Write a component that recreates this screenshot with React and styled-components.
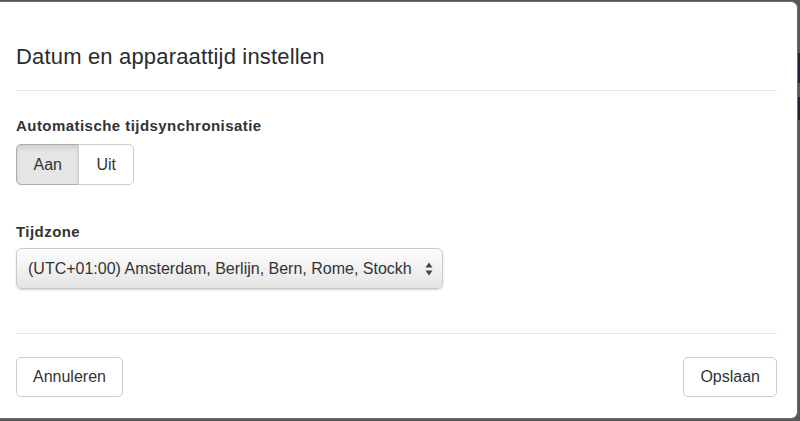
import React from "react";
import styled, { createGlobalStyle } from "styled-components";

const Global = createGlobalStyle`
  html, body {
    margin: 0;
    padding: 0;
    height: 421px;
    overflow: hidden;
  }
  body {
    background: linear-gradient(
      to bottom,
      #575757 0 53px,
      #1c2638 53px 83px,
      #575757 83px 97px,
      #1c2638 97px 120px,
      #575757 120px
    );
    font-family: "Liberation Sans", Arial, sans-serif;
    color: #333;
  }
`;

const Modal = styled.div`
  box-sizing: border-box;
  width: 798px;
  margin-top: 1px;
  background: #fff;
  border: 1px solid #6e6e6e;
  border-left: none;
  border-radius: 0 7px 7px 0;
  padding: 0 20px 0 16px;
`;

const Header = styled.div`
  padding: 43px 0 21px;
  border-bottom: 1px solid #e5e5e5;
`;

const Title = styled.h4`
  margin: 0;
  font-size: 22px;
  line-height: 24px;
  font-weight: 400;
  letter-spacing: 0.17px;
  color: #2b2b2b;
`;

const Body = styled.div`
  padding: 25px 0 44px;
  display: flex;
  flex-direction: column;
  align-items: flex-start;
`;

const Label = styled.label`
  display: block;
  font-size: 15px;
  line-height: 20px;
  font-weight: 700;
  letter-spacing: 0.45px;
  color: #333;
  margin-top: ${(p) => p.$top || 0}px;
  margin-bottom: ${(p) => p.$bottom || 0}px;
`;

const Group = styled.div`
  display: flex;
`;

const ToggleButton = styled.button`
  box-sizing: border-box;
  height: 41px;
  padding: 0 ${(p) => p.$pad}px;
  font-family: inherit;
  font-size: 16px;
  color: #333;
  background: ${(p) => (p.$active ? "#e6e6e6" : "#fff")};
  border: 1px solid ${(p) => (p.$active ? "#adadad" : "#ccc")};
  box-shadow: ${(p) => (p.$active ? "inset 0 3px 5px rgba(0,0,0,0.1)" : "none")};
  cursor: pointer;
  &:first-child {
    border-radius: 5px 0 0 5px;
  }
  &:last-child {
    border-radius: 0 5px 5px 0;
    margin-left: -1px;
  }
`;

const SelectBox = styled.div`
  box-sizing: border-box;
  width: 427px;
  height: 41px;
  display: flex;
  align-items: center;
  justify-content: space-between;
  padding: 0 9px 0 11px;
  border: 1px solid #c9c9c9;
  border-radius: 6px;
  background: linear-gradient(to bottom, #fdfdfd 0%, #f1f1f1 50%, #e4e4e4 100%);
  box-shadow: 0 1px 2px rgba(0, 0, 0, 0.18), inset 0 1px 0 #fff;
  font-size: 16px;
  color: #333;
  white-space: nowrap;
`;

const SelectText = styled.span`
  overflow: hidden;
`;

const Footer = styled.div`
  display: flex;
  justify-content: space-between;
  padding: 23px 0 21px;
  border-top: 1px solid #e5e5e5;
`;

const Button = styled.button`
  box-sizing: border-box;
  height: 40px;
  padding: 0 16px;
  font-family: inherit;
  font-size: 16px;
  color: #333;
  background: #fff;
  border: 1px solid #ccc;
  border-radius: 5px;
  cursor: pointer;
`;

const Arrows = () => (
  <svg width="8" height="14" viewBox="0 0 8 14">
    <path d="M4 0.5 L7.5 5.5 L0.5 5.5 Z" fill="#444" />
    <path d="M4 13.5 L7.5 8.5 L0.5 8.5 Z" fill="#444" />
  </svg>
);

export default function App() {
  return (
    <>
      <Global />
      <Modal>
        <Header>
          <Title>Datum en apparaattijd instellen</Title>
        </Header>
        <Body>
          <Label $bottom={8}>Automatische tijdsynchronisatie</Label>
          <Group>
            <ToggleButton $active $pad={16.5}>Aan</ToggleButton>
            <ToggleButton $pad={17}>Uit</ToggleButton>
          </Group>
          <Label $top={37} $bottom={6}>Tijdzone</Label>
          <SelectBox>
            <SelectText>(UTC+01:00) Amsterdam, Berlijn, Bern, Rome, Stockh</SelectText>
            <Arrows />
          </SelectBox>
        </Body>
        <Footer>
          <Button>Annuleren</Button>
          <Button>Opslaan</Button>
        </Footer>
      </Modal>
    </>
  );
}
